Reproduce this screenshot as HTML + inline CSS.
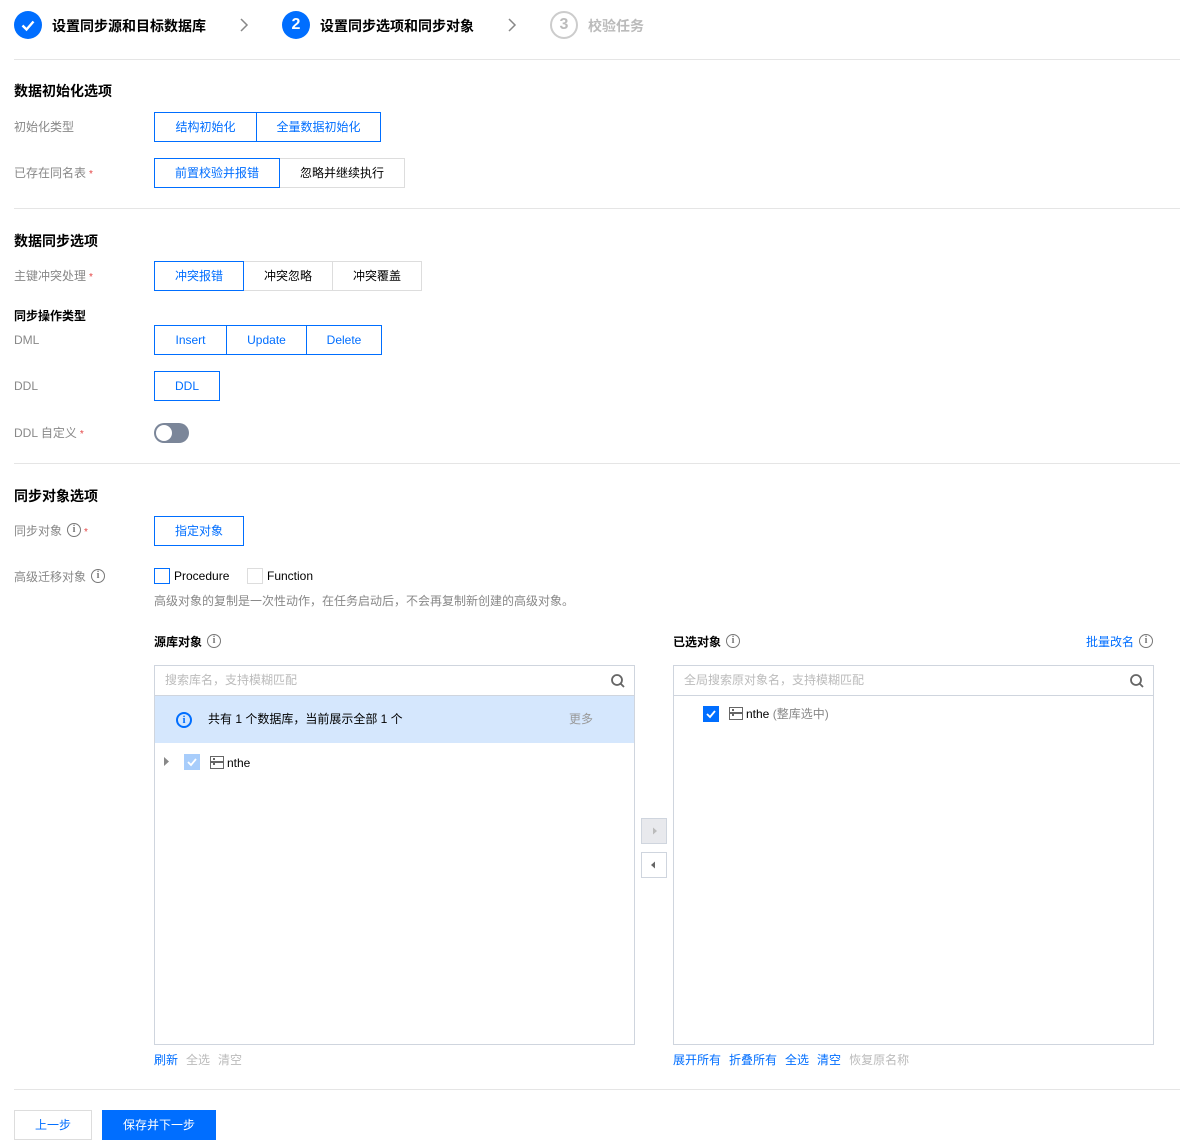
<!DOCTYPE html>
<html><head><meta charset="utf-8"><style>
*{box-sizing:border-box;margin:0;padding:0}
body{width:1180px;height:1148px;background:#fff;font-family:"Liberation Sans","Noto Sans CJK SC",sans-serif;font-size:12px;color:#000;position:relative;overflow:hidden}
.a{position:absolute;white-space:nowrap}
.lbl{color:#888;line-height:16px}
.h{font-size:14px;font-weight:bold;color:#000;line-height:20px}
.hr{position:absolute;left:14px;right:0;height:1px;background:#e5e5e5}
.btn{position:absolute;height:30px;border:1px solid #ddd;line-height:28px;text-align:center;color:#000;background:#fff}
.sel{border-color:#006eff;color:#006eff;z-index:2}
.req{color:#e54545;font-size:10px;margin-left:3px}
.info{display:inline-block;width:14px;height:14px;border:1.3px solid #777;border-radius:50%;font-size:10px;line-height:11px;text-align:center;color:#777;font-weight:bold;vertical-align:middle;margin-left:5px;margin-top:-3px;font-family:"Liberation Serif",serif}
.step{position:absolute;top:11px;width:28px;height:28px;border-radius:50%;text-align:center;line-height:28px;font-size:16px;font-weight:bold}
.stxt{position:absolute;top:16px;font-size:14px;font-weight:bold;line-height:20px}
.box{position:absolute;border:1px solid #cfd5de;background:#fff}
.link{color:#006eff}
.dis{color:#bbb}
.lk span{margin-right:8px}
.dbi{display:inline-block;width:14px;height:13px;border:1.5px solid #666;vertical-align:-2px;position:relative;margin-right:3px}
.dbi:after{content:"";position:absolute;left:0;right:0;top:4px;height:1.5px;background:#666}
.dbi:before{content:"";position:absolute;left:2px;top:1px;width:2px;height:1.5px;background:#666;box-shadow:0 5px 0 #666}
</style></head><body>
<div class="step" style="left:14px;background:#006eff;color:#fff"><svg width="28" height="28" viewBox="0 0 28 28" style="position:absolute;left:0;top:0"><path d="M8.5 14.5l4 4 7-8" stroke="#fff" stroke-width="2.4" fill="none"/></svg></div>
<div class="stxt" style="left:52px">设置同步源和目标数据库</div>
<svg class="a" style="left:239px;top:17px" width="10" height="16"><path d="M2 2l6 6-6 6" stroke="#888" stroke-width="1.5" fill="none"/></svg>
<div class="step" style="left:282px;background:#006eff;color:#fff">2</div>
<div class="stxt" style="left:320px">设置同步选项和同步对象</div>
<svg class="a" style="left:507px;top:17px" width="10" height="16"><path d="M2 2l6 6-6 6" stroke="#888" stroke-width="1.5" fill="none"/></svg>
<div class="step" style="left:550px;border:2px solid #ccc;color:#bbb;line-height:24px">3</div>
<div class="stxt" style="left:588px;color:#bbb">校验任务</div>
<div class="hr" style="top:59px"></div>

<div class="a h" style="left:14px;top:81px">数据初始化选项</div>
<div class="a lbl" style="left:14px;top:119px">初始化类型</div>
<div class="btn sel" style="left:154px;top:112px;width:103px">结构初始化</div>
<div class="btn sel" style="left:256px;top:112px;width:125px">全量数据初始化</div>
<div class="a lbl" style="left:14px;top:165px">已存在同名表<span class="req">*</span></div>
<div class="btn sel" style="left:154px;top:158px;width:126px">前置校验并报错</div>
<div class="btn" style="left:279px;top:158px;width:126px">忽略并继续执行</div>
<div class="hr" style="top:208px"></div>

<div class="a h" style="left:14px;top:231px">数据同步选项</div>
<div class="a lbl" style="left:14px;top:268px">主键冲突处理<span class="req">*</span></div>
<div class="btn sel" style="left:154px;top:261px;width:90px">冲突报错</div>
<div class="btn" style="left:243px;top:261px;width:90px">冲突忽略</div>
<div class="btn" style="left:332px;top:261px;width:90px">冲突覆盖</div>
<div class="a" style="left:14px;top:308px;font-weight:bold;line-height:16px">同步操作类型</div>
<div class="a lbl" style="left:14px;top:332px">DML</div>
<div class="btn sel" style="left:154px;top:325px;width:73px">Insert</div>
<div class="btn sel" style="left:226px;top:325px;width:81px">Update</div>
<div class="btn sel" style="left:306px;top:325px;width:76px">Delete</div>
<div class="a lbl" style="left:14px;top:378px">DDL</div>
<div class="btn sel" style="left:154px;top:371px;width:66px">DDL</div>
<div class="a lbl" style="left:14px;top:425px">DDL 自定义<span class="req">*</span></div>
<div class="a" style="left:154px;top:423px;width:35px;height:20px;border-radius:10px;background:#7b8699"><div style="position:absolute;left:2px;top:2px;width:16px;height:16px;border-radius:50%;background:#fff"></div></div>
<div class="hr" style="top:463px"></div>

<div class="a h" style="left:14px;top:486px">同步对象选项</div>
<div class="a lbl" style="left:14px;top:523px">同步对象<span class="info">i</span><span class="req">*</span></div>
<div class="btn sel" style="left:154px;top:516px;width:90px">指定对象</div>
<div class="a lbl" style="left:14px;top:569px">高级迁移对象<span class="info">i</span></div>
<div class="a" style="left:154px;top:568px;width:16px;height:16px;border:1px solid #006eff"></div>
<div class="a" style="left:174px;top:568px;line-height:16px">Procedure</div>
<div class="a" style="left:247px;top:568px;width:16px;height:16px;border:1px solid #ddd"></div>
<div class="a" style="left:267px;top:568px;line-height:16px">Function</div>
<div class="a lbl" style="left:154px;top:593px">高级对象的复制是一次性动作，在任务启动后，不会再复制新创建的高级对象。</div>

<div class="a" style="left:154px;top:634px;font-weight:bold;line-height:16px">源库对象<span class="info">i</span></div>
<div class="box" style="left:154px;top:665px;width:481px;height:380px">
 <div style="height:30px;border-bottom:1px solid #cfd5de;padding-left:10px;line-height:29px;color:#bbb;position:relative">搜索库名，支持模糊匹配
  <svg style="position:absolute;right:8px;top:7px" width="16" height="16"><circle cx="7" cy="7" r="5" stroke="#666" stroke-width="1.8" fill="none"/><path d="M10.5 10.5l3.5 3.5" stroke="#666" stroke-width="1.8"/></svg></div>
 <div style="height:47px;background:#d5e7fd;position:relative;line-height:47px">
  <span class="a" style="left:21px;top:16px;width:16px;height:16px;border:2px solid #006eff;border-radius:50%;color:#006eff;font-size:11px;font-weight:bold;line-height:12px;text-align:center;font-family:'Liberation Serif',serif">i</span>
  <span class="a" style="left:53px;top:0">共有 1 个数据库，当前展示全部 1 个</span>
  <span class="a" style="left:414px;top:0;color:#999">更多</span>
 </div>
 <svg class="a" style="left:9px;top:91px" width="6" height="9"><path d="M0 0l5 4.5-5 4.5z" fill="#888"/></svg>
 <div class="a" style="left:29px;top:88px;width:16px;height:16px;background:#a8cdfb"><svg width="16" height="16"><path d="M4 8l3 3 5-6" stroke="#fff" stroke-width="1.8" fill="none"/></svg></div>
 <div class="a" style="left:55px;top:89px;line-height:16px"><span class="dbi"></span>nthe</div>
</div>

<div class="a" style="left:641px;top:818px;width:26px;height:26px;border:1px solid #cfd5de;background:#e8e9ed"><svg width="24" height="24"><path d="M11 8.5l4 3.5-4 3.5z" fill="#bbb"/></svg></div>
<div class="a" style="left:641px;top:852px;width:26px;height:26px;border:1px solid #cfd5de;background:#fff"><svg width="24" height="24"><path d="M13 8.5l-4 3.5 4 3.5z" fill="#666"/></svg></div>

<div class="a" style="left:673px;top:634px;font-weight:bold;line-height:16px">已选对象<span class="info">i</span></div>
<div class="a link" style="left:1086px;top:634px;line-height:16px">批量改名<span class="info">i</span></div>
<div class="box" style="left:673px;top:665px;width:481px;height:380px">
 <div style="height:30px;border-bottom:1px solid #cfd5de;padding-left:10px;line-height:29px;color:#bbb;position:relative">全局搜索原对象名，支持模糊匹配
  <svg style="position:absolute;right:8px;top:7px" width="16" height="16"><circle cx="7" cy="7" r="5" stroke="#666" stroke-width="1.8" fill="none"/><path d="M10.5 10.5l3.5 3.5" stroke="#666" stroke-width="1.8"/></svg></div>
 <div class="a" style="left:29px;top:40px;width:16px;height:16px;background:#006eff"><svg width="16" height="16"><path d="M4 8l3 3 5-6" stroke="#fff" stroke-width="1.8" fill="none"/></svg></div>
 <div class="a" style="left:55px;top:40px;line-height:16px"><span class="dbi"></span>nthe <span style="color:#888">(整库选中)</span></div>
</div>

<div class="a lk" style="left:154px;top:1052px;line-height:16px"><span class="link">刷新</span><span class="dis">全选</span><span class="dis">清空</span></div>
<div class="a lk" style="left:673px;top:1052px;line-height:16px"><span class="link">展开所有</span><span class="link">折叠所有</span><span class="link">全选</span><span class="link">清空</span><span class="dis">恢复原名称</span></div>
<div class="hr" style="top:1089px"></div>
<div class="btn" style="left:14px;top:1110px;width:78px;color:#006eff">上一步</div>
<div class="btn" style="left:102px;top:1110px;width:114px;background:#006eff;border-color:#006eff;color:#fff">保存并下一步</div>
</body></html>
